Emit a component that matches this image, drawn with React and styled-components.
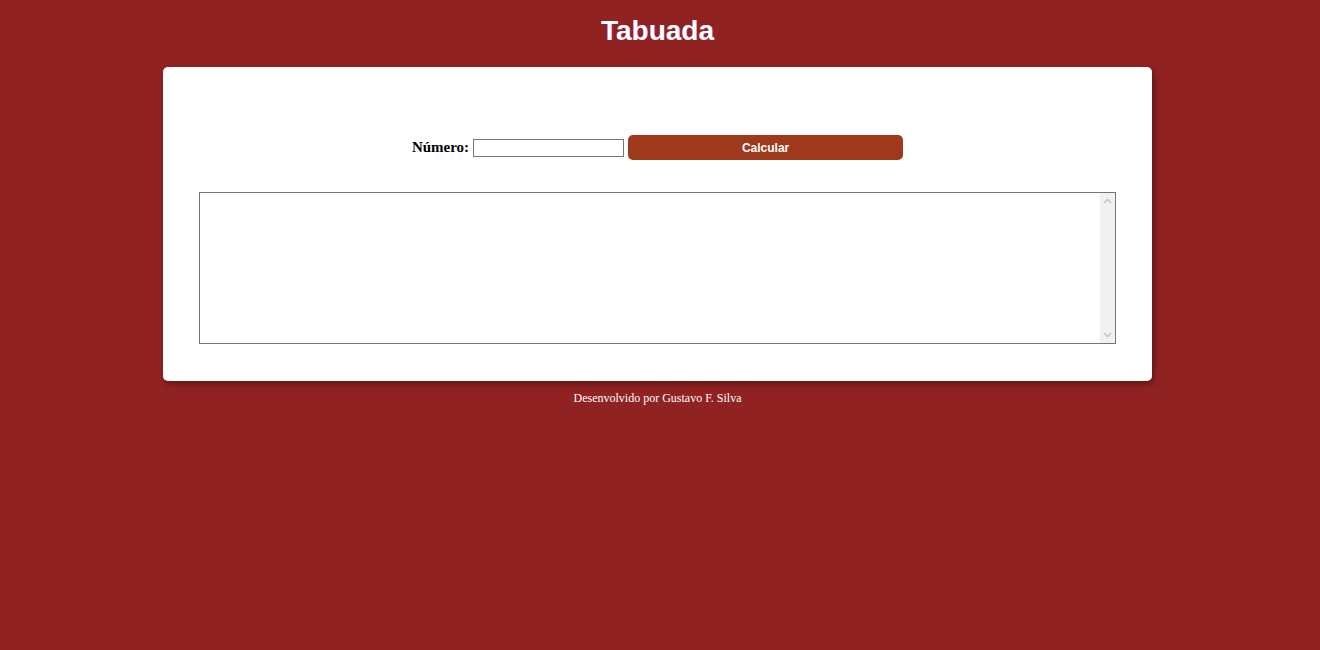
import React from 'react';
import styled, { createGlobalStyle } from 'styled-components';

const Global = createGlobalStyle`
  html, body {
    margin: 0;
    padding: 0;
    background: #912222;
  }
  body {
    font-family: 'Liberation Serif', 'Times New Roman', serif;
  }
`;

const Page = styled.div`
  min-height: 650px;
  padding-right: 5px;
  display: flex;
  flex-direction: column;
  align-items: center;
`;

const Title = styled.h1`
  margin: 15px 0 20px;
  font-family: 'Liberation Sans', Arial, sans-serif;
  font-size: 28px;
  line-height: 32px;
  font-weight: bold;
  color: #fff;
  text-shadow: 1px 0 0 rgba(160, 60, 255, 0.35);
`;

const Card = styled.main`
  box-sizing: border-box;
  width: 989px;
  padding: 68px 36px 37px;
  background: #fff;
  border-radius: 5px;
  box-shadow: 2px 3px 6px rgba(0, 0, 0, 0.35);
  display: flex;
  flex-direction: column;
  align-items: center;
  gap: 32px;
`;

const Row = styled.div`
  display: flex;
  align-items: center;
  height: 25px;
`;

const Label = styled.label`
  font-size: 15px;
  font-weight: bold;
  color: #000;
  margin-right: 4px;
`;

const NumberInput = styled.input`
  box-sizing: border-box;
  width: 151px;
  height: 18px;
  border: 1px solid #767676;
  padding: 1px 2px;
  margin-right: 4px;
  font-size: 13px;
`;

const Button = styled.button`
  width: 275px;
  height: 25px;
  border: none;
  border-radius: 5px;
  background: #9e3a1b;
  color: #fff;
  font-family: 'Liberation Sans', Arial, sans-serif;
  font-size: 12px;
  font-weight: bold;
  cursor: pointer;
`;

const OutputBox = styled.div`
  position: relative;
  width: 917px;
  height: 152px;
`;

const Output = styled.textarea`
  box-sizing: border-box;
  display: block;
  width: 100%;
  height: 100%;
  border: 1px solid #767676;
  padding: 2px 17px 2px 2px;
  resize: none;
  overflow: hidden;
  margin: 0;
  font-family: 'Liberation Mono', monospace;
  font-size: 13px;
`;

const ScrollTrack = styled.div`
  position: absolute;
  top: 1px;
  right: 1px;
  bottom: 1px;
  width: 15px;
  background: #f1f1f1;
  display: flex;
  flex-direction: column;
  justify-content: space-between;
  align-items: center;
  padding: 5px 0;
  box-sizing: border-box;
  pointer-events: none;
`;

const Chevron = ({ up }) => (
  <svg width="9" height="6" viewBox="0 0 9 6">
    <path
      d={up ? 'M1 5 L4.5 1.5 L8 5' : 'M1 1 L4.5 4.5 L8 1'}
      fill="none"
      stroke="#c1c1c1"
      strokeWidth="1.4"
    />
  </svg>
);

const Footer = styled.footer`
  margin-top: 10px;
  font-size: 12px;
  color: #fff;
`;

export default function App() {
  return (
    <Page>
      <Global />
      <Title>Tabuada</Title>
      <Card>
        <Row>
          <Label htmlFor="num">Número:</Label>
          <NumberInput id="num" type="text" />
          <Button>Calcular</Button>
        </Row>
        <OutputBox>
          <Output readOnly />
          <ScrollTrack>
            <Chevron up />
            <Chevron />
          </ScrollTrack>
        </OutputBox>
      </Card>
      <Footer>Desenvolvido por Gustavo F. Silva</Footer>
    </Page>
  );
}
